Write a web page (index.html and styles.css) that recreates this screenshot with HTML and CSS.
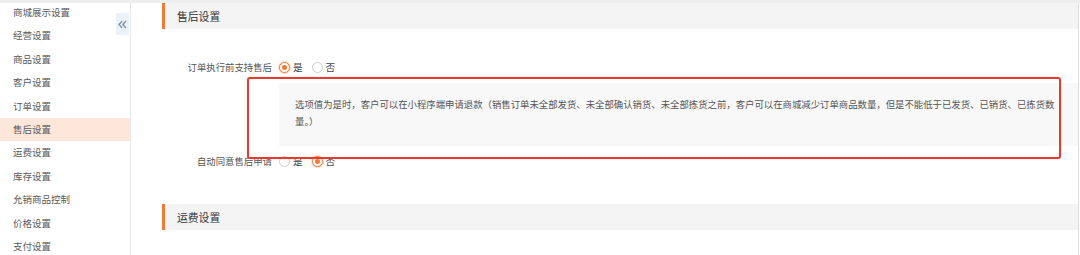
FILE: index.html
```html
<!DOCTYPE html>
<html lang="zh-CN">
<head>
    <meta charset="UTF-8">
    <meta name="viewport" content="width=device-width, initial-scale=1.0">
    <title>售后设置</title>
    <link rel="stylesheet" href="styles.css">
</head>
<body>
    <div class="topbar"></div>
    <div class="layout">
        <aside class="sidebar">
            <ul class="menu">
                <li>商城展示设置</li>
                <li>经营设置</li>
                <li>商品设置</li>
                <li>客户设置</li>
                <li>订单设置</li>
                <li class="active">售后设置</li>
                <li>运费设置</li>
                <li>库存设置</li>
                <li>允销商品控制</li>
                <li>价格设置</li>
                <li>支付设置</li>
            </ul>
            <button class="collapse" type="button">
                <svg width="9" height="9" viewBox="0 0 9 9">
                    <path d="M4.2 1 L1 4.5 L4.2 8 M8 1 L4.8 4.5 L8 8" fill="none" stroke="#7f8fa6" stroke-width="1.3"/>
                </svg>
            </button>
        </aside>

        <main class="content">
            <div class="section-title">售后设置</div>
            <div class="form">
                <div class="form-row">
                    <label class="form-label">订单执行前支持售后</label>
                    <div class="radios">
                        <span class="radio checked"></span><span class="radio-text">是</span>
                        <span class="radio"></span><span class="radio-text">否</span>
                    </div>
                </div>
                <div class="tip">
                    选项值为是时，客户可以在小程序端申请退款（销售订单未全部发货、未全部确认销货、未全部拣货之前，客户可以在商城减少订单商品数量，但是不能低于已发货、已销货、已拣货数量。）
                </div>
                <div class="form-row second">
                    <label class="form-label">自动同意售后申请</label>
                    <div class="radios">
                        <span class="radio"></span><span class="radio-text">是</span>
                        <span class="radio checked"></span><span class="radio-text">否</span>
                    </div>
                </div>
            </div>
            <div class="section-title">运费设置</div>
        </main>
    </div>

    <!-- 标注框 -->
    <div class="annotation"></div>
</body>
</html>
```

FILE: styles.css
```css
* {
    box-sizing: border-box;
}
body {
    margin: 0;
    height: 255px;
    overflow: hidden;
    background-color: #ffffff;
    font-family: "Noto Sans CJK SC", "Noto Sans", sans-serif;
    color: #555;
    position: relative;
}
.topbar {
    height: 3px;
    background-color: #eeeeee;
}
.layout {
    display: flex;
    height: 252px;
}
.sidebar {
    width: 131px;
    border-right: 1px solid #e8e8e8;
    position: relative;
}
.menu {
    list-style-type: none;
    margin: -2px 0 0 0;
    padding: 0;
}
.menu li {
    height: 23.4px;
    line-height: 23.4px;
    padding-left: 13px;
    font-size: 9.5px;
    color: #5a5a5a;
}
.menu li.active {
    background-color: #fde7db;
}
.collapse {
    position: absolute;
    top: 10px;
    right: 1px;
    width: 13px;
    height: 22px;
    padding: 0;
    border: none;
    background-color: #ebf1f9;
    display: flex;
    align-items: center;
    justify-content: center;
}
.content {
    flex: 1;
    padding-left: 31px;
    margin-right: 1px;
    border-right: 1px solid #dddddd;
}
.section-title {
    height: 26px;
    line-height: 26px;
    background-color: #f4f4f4;
    border-left: 3px solid #f07a3a;
    padding-left: 12px;
    font-size: 10.8px;
    color: #333;
}
.form {
    padding-top: 28px;
    padding-bottom: 33px;
}
.form-row {
    display: flex;
    align-items: center;
    height: 20px;
}
.form-row.second {
    margin-top: 5px;
}
.form-label {
    width: 110px;
    text-align: right;
    font-size: 9.4px;
    color: #555;
    margin-right: 7px;
}
.radios {
    display: flex;
    align-items: center;
}
.radio {
    width: 11px;
    height: 11px;
    border: 1px solid #cfcfcf;
    border-radius: 50%;
    background-color: #fff;
    display: flex;
    align-items: center;
    justify-content: center;
}
.radio.checked {
    border-color: #f07a3a;
    box-shadow: 0 0 0 1px #fbd9c6;
}
.radio.checked::after {
    content: "";
    width: 5px;
    height: 5px;
    border-radius: 50%;
    background-color: #f07a3a;
}
.radio-text {
    font-size: 9.6px;
    color: #444;
    margin-left: 3px;
    margin-right: 9px;
}
.tip {
    margin-top: 6px;
    margin-left: 117px;
    padding: 13px 16px 15px 16px;
    min-height: 63px;
    background-color: #f8f8f8;
    font-size: 9.4px;
    line-height: 17px;
    color: #555;
}
.annotation {
    position: absolute;
    left: 247px;
    top: 77px;
    width: 814px;
    height: 82px;
    border: 2.5px solid #e63a2f;
    border-radius: 3px;
    box-shadow: 0 0 1px rgba(230, 58, 47, 0.5);
}
```
